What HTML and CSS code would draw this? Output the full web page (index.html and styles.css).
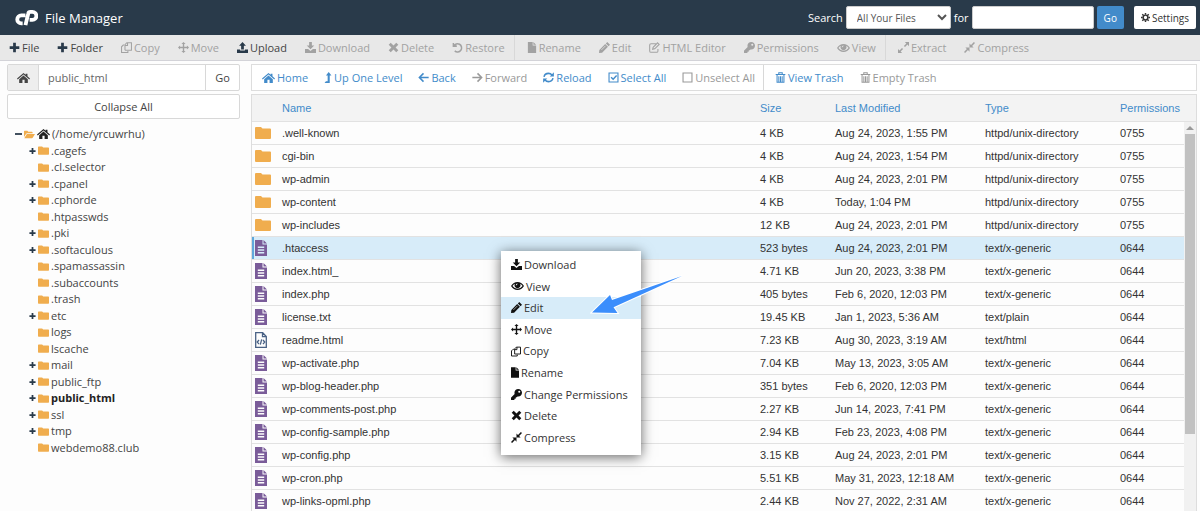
FILE: index.html
```html
<!DOCTYPE html>
<html lang="en">
<head>
    <meta charset="UTF-8">
    <title>File Manager</title>
    <link rel="stylesheet" href="styles.css">
</head>
<body>
    <!-- Icon set -->
    <svg class="sprite" aria-hidden="true">
        <symbol id="plus" viewBox="0 0 16 16"><path d="M6 1h4v5h5v4h-5v5H6v-5H1V6h5z"/></symbol>
        <symbol id="minus" viewBox="0 0 16 16"><path d="M0 6h16v4H0z"/></symbol>
        <symbol id="copy" viewBox="0 0 16 16"><path fill="none" stroke="currentColor" stroke-width="1.500" d="M5.800 12V3.800L8.500 1h6.700v11H5.800M9.500 1v4H6M4.500 4.500H3.200L.8 7v8.200H10V13"/></symbol>
        <symbol id="move" viewBox="0 0 16 16"><path d="M8 0l3 3H9v4h4V5l3 3-3 3V9H9v4h2l-3 3-3-3h2V9H3v2L0 8l3-3v2h4V3H5z"/></symbol>
        <symbol id="upload" viewBox="0 0 16 16"><path d="M8 0l5 5.500h-3V11H6V5.500H3zM0 11h4.500v1.500h7V11H16v5H0z"/></symbol>
        <symbol id="download" viewBox="0 0 16 16"><path d="M6 0h4v5h3.500L8 10.500 2.500 5H6zM0 10h4.500L8 13l3.500-3H16v6H0z"/></symbol>
        <symbol id="times" viewBox="0 0 16 16"><path d="M4 1l4 4 4-4 3 3-4 4 4 4-3 3-4-4-4 4-3-3 4-4-4-4z"/></symbol>
        <symbol id="undo" viewBox="0 0 16 16"><path fill="none" stroke="currentColor" stroke-width="2.200" d="M2 1.500V6h5M2.500 6A6 6 0 1 1 4 13"/></symbol>
        <symbol id="file" viewBox="0 0 12 16"><path d="M0 0h7v5h5v11H0zM8 0l4 4H8z"/></symbol>
        <symbol id="pencil" viewBox="0 0 16 16"><path d="M12 0l4 4-2 2-4-4zM9 3l4 4-8.500 8.500L0 16l.5-4.500z"/><path stroke="#fff" stroke-width=".8" d="M3.500 11.500l6-6"/></symbol>
        <symbol id="edit-box" viewBox="0 0 16 16"><path fill="none" stroke="currentColor" stroke-width="1.500" d="M10 2.500H3Q1 2.500 1 4.500V13q0 2 2 2h8q2 0 2-2v-3M12.500 1.200l2.300 2.300-6.500 6.500-3 .7.700-3z"/></symbol>
        <symbol id="key" viewBox="0 0 512 512"><path d="M512 176c0 97-79 176-176 176-11 0-22-1-33-3l-24 27q-8 8-18 8h-37v40q0 24-24 24h-40v40q0 24-24 24H24q-24 0-24-24v-78q0-10 7-17l162-162c-6-17-9-36-9-55C160 79 239 0 336 0s176 79 176 176zM336 128a48 48 0 1 0 96 0 48 48 0 0 0-96 0z"/></symbol>
        <symbol id="eye" viewBox="0 0 18 16"><path fill-rule="evenodd" d="M0 8q3.500-5.500 9-5.500T18 8q-3.500 5.500-9 5.500T0 8zm2 0q3 3.800 7 3.800T16 8q-1.300-2-3.300-3a4.200 4.200 0 1 1-7.400 0Q3.300 6 2 8zm7-3.500A2.500 2.500 0 0 0 6.500 7h1.200Q7.800 5.800 9 5.700z"/></symbol>
        <symbol id="expand" viewBox="0 0 16 16"><path d="M10 0h6v6l-2.200-2.200-3.600 3.600-1.600-1.600 3.600-3.600zM0 10l2.200 2.200 3.600-3.600 1.600 1.600-3.600 3.600L6 16H0z"/></symbol>
        <symbol id="compress" viewBox="0 0 16 16"><path d="M8 8V2l2.200 2.200L14.400 0 16 1.600l-4.200 4.200L14 8zM8 8v6l-2.200-2.200L1.600 16 0 14.400l4.200-4.200L2 8z"/></symbol>
        <symbol id="home" viewBox="0 0 18 16"><path d="M9 1l3 2.600V2h2.500v3.700L18 8.800 17 10 9 3.200 1 10 0 8.800zM9 4.500l6 5.200V15h-4.500v-4.500h-3V15H3V9.700z"/></symbol>
        <symbol id="level-up" viewBox="0 0 10 16"><path d="M6 0l4 5H7.500v11H0l2-2.500h2.500V5H2z"/></symbol>
        <symbol id="arrow-left" viewBox="0 0 16 16"><path fill="none" stroke="currentColor" stroke-width="2.200" d="M15.500 8H2M8 2L2 8l6 6"/></symbol>
        <symbol id="arrow-right" viewBox="0 0 16 16"><path fill="none" stroke="currentColor" stroke-width="2.200" d="M.5 8H14M8 2l6 6-6 6"/></symbol>
        <symbol id="refresh" viewBox="0 0 16 16"><path fill="none" stroke="currentColor" stroke-width="2.200" d="M1.500 7Q2.500 2 8 2q3 0 5 2.500M14.500 9Q13.500 14 8 14q-3 0-5-2.500"/><path d="M15.800.5v6H9.800zM.2 15.500v-6h6z"/></symbol>
        <symbol id="check-box" viewBox="0 0 16 16"><path fill="none" stroke="currentColor" stroke-width="1.600" d="M1.500 1.500h13v13h-13z"/><path fill="none" stroke="currentColor" stroke-width="2" d="M4.500 7.500l3 3 5-5.500"/></symbol>
        <symbol id="empty-box" viewBox="0 0 16 16"><path fill="none" stroke="currentColor" stroke-width="1.600" d="M1.500 1.500h13v13h-13z"/></symbol>
        <symbol id="trash" viewBox="0 0 14 16"><path fill="none" stroke="currentColor" stroke-width="1.500" d="M0 3.500h14M4.500 3V1h5v2M2 4v11h10V4M4.600 6v8M7 6v8M9.400 6v8"/></symbol>
        <symbol id="cog" viewBox="0 0 16 16"><circle cx="8" cy="8" r="4.200" fill="none" stroke="currentColor" stroke-width="2.600"/><path stroke="currentColor" stroke-width="2.600" d="M8 0v3M8 13v3M0 8h3M13 8h3M2.300 2.300l2.200 2.200M11.500 11.500l2.200 2.200M2.300 13.700l2.200-2.200M11.500 4.500l2.200-2.200"/></symbol>
        <symbol id="folder" viewBox="0 0 16 12"><path d="M1 0h5l1.500 1.500H15q1 0 1 1V11q0 1-1 1H1q-1 0-1-1V1q0-1 1-1z"/></symbol>
        <symbol id="folder-open" viewBox="0 0 18 12"><path d="M0 10V1q0-1 1-1h4.500L7 1.500h6q1 0 1 1V4H5Q4 4 3.300 5zM4.700 5H18l-3.500 6q-.6 1-1.500 1H.5z"/></symbol>
        <symbol id="file-text" viewBox="0 0 12 16"><path fill-rule="evenodd" d="M0 0h7.500v4.500H12V16H0zM8.500 0L12 3.500H8.500zM2.800 6.500V8h6.400V6.500zm0 2.700v1.500h6.400V9.200zm0 2.800v1.500h6.400V12z"/></symbol>
        <symbol id="file-code" viewBox="0 0 12 16"><path fill="none" stroke="currentColor" stroke-width="1.300" d="M.7.7h7L11.300 4.500v10.800H.7zM7.500.7v4h4M4 8L2.300 10 4 12M8 8l1.700 2L8 12M6.700 7.300l-1.400 5.400"/></symbol>
    </svg>

    <header class="topbar">
        <svg class="logo" viewBox="0 0 66 48" role="img" aria-label="cPanel">
            <path d="M30 18H18a11 11 0 0 0 0 23h4M30 46l8-33q1-5 6-5h6a11 11 0 0 1 0 23H42"/>
        </svg>
        <h1>File Manager</h1>
        <form class="search">
            <label for="scope">Search</label>
            <select id="scope">
                <option>All Your Files</option>
                <option>Only public_html</option>
                <option>Current Directory</option>
            </select>
            <label for="query">for</label>
            <input type="text" id="query">
            <button type="button" class="btn-primary">Go</button>
        </form>
        <button type="button" class="btn-settings"><svg class="icon"><use href="#cog"/></svg>Settings</button>
    </header>

    <nav class="toolbar">
        <button type="button"><svg class="icon"><use href="#plus"/></svg>File</button>
        <button type="button"><svg class="icon"><use href="#plus"/></svg>Folder</button>
        <button type="button" disabled><svg class="icon"><use href="#copy"/></svg>Copy</button>
        <button type="button" disabled><svg class="icon"><use href="#move"/></svg>Move</button>
        <button type="button"><svg class="icon"><use href="#upload"/></svg>Upload</button>
        <button type="button" disabled><svg class="icon"><use href="#download"/></svg>Download</button>
        <button type="button" disabled><svg class="icon"><use href="#times"/></svg>Delete</button>
        <button type="button" disabled><svg class="icon"><use href="#undo"/></svg>Restore</button>
        <span class="divider"></span>
        <button type="button" disabled><svg class="icon narrow"><use href="#file"/></svg>Rename</button>
        <button type="button" disabled><svg class="icon"><use href="#pencil"/></svg>Edit</button>
        <button type="button" disabled><svg class="icon"><use href="#edit-box"/></svg>HTML Editor</button>
        <button type="button" disabled><svg class="icon"><use href="#key"/></svg>Permissions</button>
        <button type="button" disabled><svg class="icon wide"><use href="#eye"/></svg>View</button>
        <span class="divider"></span>
        <button type="button" disabled><svg class="icon"><use href="#expand"/></svg>Extract</button>
        <button type="button" disabled><svg class="icon"><use href="#compress"/></svg>Compress</button>
    </nav>

    <main class="content">
        <aside class="sidebar">
            <form class="path">
                <button type="button" class="path-home" aria-label="Home"><svg class="icon wide"><use href="#home"/></svg></button>
                <input type="text" value="public_html" aria-label="Path">
                <button type="button">Go</button>
            </form>
            <button type="button" class="collapse">Collapse All</button>
            <ul class="tree">
                <li class="root"><svg class="toggle"><use href="#minus"/></svg><svg class="dir"><use href="#folder-open"/></svg><svg class="icon wide"><use href="#home"/></svg>(/home/yrcuwrhu)</li>
                <li><svg class="toggle"><use href="#plus"/></svg><svg class="dir"><use href="#folder"/></svg>.cagefs</li>
                <li><svg class="dir"><use href="#folder"/></svg>.cl.selector</li>
                <li><svg class="toggle"><use href="#plus"/></svg><svg class="dir"><use href="#folder"/></svg>.cpanel</li>
                <li><svg class="toggle"><use href="#plus"/></svg><svg class="dir"><use href="#folder"/></svg>.cphorde</li>
                <li><svg class="dir"><use href="#folder"/></svg>.htpasswds</li>
                <li><svg class="toggle"><use href="#plus"/></svg><svg class="dir"><use href="#folder"/></svg>.pki</li>
                <li><svg class="toggle"><use href="#plus"/></svg><svg class="dir"><use href="#folder"/></svg>.softaculous</li>
                <li><svg class="dir"><use href="#folder"/></svg>.spamassassin</li>
                <li><svg class="dir"><use href="#folder"/></svg>.subaccounts</li>
                <li><svg class="dir"><use href="#folder"/></svg>.trash</li>
                <li><svg class="toggle"><use href="#plus"/></svg><svg class="dir"><use href="#folder"/></svg>etc</li>
                <li><svg class="dir"><use href="#folder"/></svg>logs</li>
                <li><svg class="dir"><use href="#folder"/></svg>lscache</li>
                <li><svg class="toggle"><use href="#plus"/></svg><svg class="dir"><use href="#folder"/></svg>mail</li>
                <li><svg class="toggle"><use href="#plus"/></svg><svg class="dir"><use href="#folder"/></svg>public_ftp</li>
                <li class="current"><svg class="toggle"><use href="#plus"/></svg><svg class="dir"><use href="#folder"/></svg>public_html</li>
                <li><svg class="toggle"><use href="#plus"/></svg><svg class="dir"><use href="#folder"/></svg>ssl</li>
                <li><svg class="toggle"><use href="#plus"/></svg><svg class="dir"><use href="#folder"/></svg>tmp</li>
                <li><svg class="dir"><use href="#folder"/></svg>webdemo88.club</li>
            </ul>
        </aside>

        <section class="files">
            <div class="actions">
                <button type="button"><svg class="icon wide"><use href="#home"/></svg>Home</button>
                <button type="button"><svg class="icon slim"><use href="#level-up"/></svg>Up One Level</button>
                <button type="button"><svg class="icon"><use href="#arrow-left"/></svg>Back</button>
                <button type="button" disabled><svg class="icon"><use href="#arrow-right"/></svg>Forward</button>
                <button type="button"><svg class="icon"><use href="#refresh"/></svg>Reload</button>
                <button type="button"><svg class="icon"><use href="#check-box"/></svg>Select All</button>
                <button type="button" disabled><svg class="icon"><use href="#empty-box"/></svg>Unselect All</button>
                <span class="divider"></span>
                <button type="button"><svg class="icon"><use href="#trash"/></svg>View Trash</button>
                <button type="button" disabled><svg class="icon"><use href="#trash"/></svg>Empty Trash</button>
            </div>

            <div class="list">
                <table>
                    <thead>
                        <tr><th></th><th>Name</th><th>Size</th><th>Last Modified</th><th>Type</th><th>Permissions</th></tr>
                    </thead>
                    <tbody>
                        <tr><td><svg class="folder"><use href="#folder"/></svg></td><td>.well-known</td><td>4 KB</td><td>Aug 24, 2023, 1:55 PM</td><td>httpd/unix-directory</td><td>0755</td></tr>
                        <tr><td><svg class="folder"><use href="#folder"/></svg></td><td>cgi-bin</td><td>4 KB</td><td>Aug 24, 2023, 1:54 PM</td><td>httpd/unix-directory</td><td>0755</td></tr>
                        <tr><td><svg class="folder"><use href="#folder"/></svg></td><td>wp-admin</td><td>4 KB</td><td>Aug 24, 2023, 2:01 PM</td><td>httpd/unix-directory</td><td>0755</td></tr>
                        <tr><td><svg class="folder"><use href="#folder"/></svg></td><td>wp-content</td><td>4 KB</td><td>Today, 1:04 PM</td><td>httpd/unix-directory</td><td>0755</td></tr>
                        <tr><td><svg class="folder"><use href="#folder"/></svg></td><td>wp-includes</td><td>12 KB</td><td>Aug 24, 2023, 2:01 PM</td><td>httpd/unix-directory</td><td>0755</td></tr>
                        <tr class="selected"><td><svg class="doc"><use href="#file-text"/></svg></td><td>.htaccess</td><td>523 bytes</td><td>Aug 24, 2023, 2:01 PM</td><td>text/x-generic</td><td>0644</td></tr>
                        <tr><td><svg class="doc"><use href="#file-text"/></svg></td><td>index.html_</td><td>4.71 KB</td><td>Jun 20, 2023, 3:38 PM</td><td>text/x-generic</td><td>0644</td></tr>
                        <tr><td><svg class="doc"><use href="#file-text"/></svg></td><td>index.php</td><td>405 bytes</td><td>Feb 6, 2020, 12:03 PM</td><td>text/x-generic</td><td>0644</td></tr>
                        <tr><td><svg class="doc"><use href="#file-text"/></svg></td><td>license.txt</td><td>19.45 KB</td><td>Jan 1, 2023, 5:36 AM</td><td>text/plain</td><td>0644</td></tr>
                        <tr><td><svg class="doc code"><use href="#file-code"/></svg></td><td>readme.html</td><td>7.23 KB</td><td>Aug 30, 2023, 3:19 AM</td><td>text/html</td><td>0644</td></tr>
                        <tr><td><svg class="doc"><use href="#file-text"/></svg></td><td>wp-activate.php</td><td>7.04 KB</td><td>May 13, 2023, 3:05 AM</td><td>text/x-generic</td><td>0644</td></tr>
                        <tr><td><svg class="doc"><use href="#file-text"/></svg></td><td>wp-blog-header.php</td><td>351 bytes</td><td>Feb 6, 2020, 12:03 PM</td><td>text/x-generic</td><td>0644</td></tr>
                        <tr><td><svg class="doc"><use href="#file-text"/></svg></td><td>wp-comments-post.php</td><td>2.27 KB</td><td>Jun 14, 2023, 7:41 PM</td><td>text/x-generic</td><td>0644</td></tr>
                        <tr><td><svg class="doc"><use href="#file-text"/></svg></td><td>wp-config-sample.php</td><td>2.94 KB</td><td>Feb 23, 2023, 4:08 PM</td><td>text/x-generic</td><td>0644</td></tr>
                        <tr><td><svg class="doc"><use href="#file-text"/></svg></td><td>wp-config.php</td><td>3.15 KB</td><td>Aug 24, 2023, 2:01 PM</td><td>text/x-generic</td><td>0644</td></tr>
                        <tr><td><svg class="doc"><use href="#file-text"/></svg></td><td>wp-cron.php</td><td>5.51 KB</td><td>May 31, 2023, 12:18 AM</td><td>text/x-generic</td><td>0644</td></tr>
                        <tr><td><svg class="doc"><use href="#file-text"/></svg></td><td>wp-links-opml.php</td><td>2.44 KB</td><td>Nov 27, 2022, 2:31 AM</td><td>text/x-generic</td><td>0644</td></tr>
                    </tbody>
                </table>
                <div class="scrollbar"><span class="scroll-up"></span><span class="thumb"></span></div>
            </div>
        </section>
    </main>

    <!-- Right-click menu of the selected file -->
    <div class="menu" role="menu">
        <button type="button" role="menuitem"><svg class="icon"><use href="#download"/></svg>Download</button>
        <button type="button" role="menuitem"><svg class="icon wide"><use href="#eye"/></svg>View</button>
        <button type="button" role="menuitem" class="active"><svg class="icon"><use href="#pencil"/></svg>Edit</button>
        <button type="button" role="menuitem"><svg class="icon"><use href="#move"/></svg>Move</button>
        <button type="button" role="menuitem"><svg class="icon narrow"><use href="#copy"/></svg>Copy</button>
        <button type="button" role="menuitem"><svg class="icon slim"><use href="#file"/></svg>Rename</button>
        <button type="button" role="menuitem"><svg class="icon"><use href="#key"/></svg>Change Permissions</button>
        <button type="button" role="menuitem"><svg class="icon"><use href="#times"/></svg>Delete</button>
        <button type="button" role="menuitem"><svg class="icon"><use href="#compress"/></svg>Compress</button>
    </div>
    <svg class="pointer" viewBox="0 0 94 42" aria-hidden="true"><path d="M2 38.500L20 21l2 5L92 2 23.500 33.300l4 5.700z"/></svg>
</body>
</html>
```
FILE: styles.css
```css
* {
    box-sizing: border-box;
}

body {
    display: flex;
    flex-direction: column;
    height: 100vh;
    margin: 0;
    overflow: hidden;
    position: relative;
    font-family: "Open Sans", sans-serif;
    font-size: 11px;
    color: #444;
    background: #fdfdfd;
}

button, input, select {
    font: inherit;
    color: inherit;
    margin: 0;
}

button {
    display: flex;
    align-items: center;
    gap: 2px;
    padding: 0;
    border: 0;
    background: none;
    white-space: nowrap;
    cursor: pointer;
}

svg {
    flex: none;
    fill: currentColor;
}

.sprite {
    position: absolute;
    width: 0;
    height: 0;
}

.icon {
    width: 11px;
    height: 11px;
}

.icon.wide {
    width: 13px;
    height: 12px;
}

.icon.narrow {
    width: 10px;
}

.icon.slim {
    width: 8px;
}

/* Header */
.topbar {
    display: flex;
    align-items: center;
    height: 35px;
    padding: 0 4px 0 15px;
    background: #293a4a;
    color: #fff;
}

.logo {
    width: 23px;
    height: 17px;
    margin-right: 7px;
}

.logo path {
    fill: none;
    stroke: #fff;
    stroke-width: 11;
    stroke-linejoin: round;
}

h1 {
    margin: 0 auto 0 0;
    font-size: 13px;
    font-weight: normal;
}

.search {
    display: flex;
    align-items: center;
    gap: 3px;
    margin-right: 10px;
}

.search select, .search input {
    height: 23px;
    border: 1px solid #ccc;
    border-radius: 2px;
    background: #fff;
    color: #555;
    font-size: 10px;
}

.search select {
    width: 105px;
    padding: 0 0 0 6px;
}

.search input {
    width: 122px;
}

.btn-primary, .btn-settings {
    height: 23px;
    padding: 0 7px;
    font-size: 10px;
    border-radius: 2px;
}

.btn-primary {
    background: #428bca;
    color: #fff;
}

.btn-settings {
    background: #fff;
    color: #333;
}

.btn-settings .icon {
    width: 9px;
}

/* Toolbars */
.toolbar, .actions {
    display: flex;
    align-items: stretch;
}

.toolbar {
    height: 26px;
    background: #e8e8e8;
    border-bottom: 1px solid #d3d3d8;
}

.toolbar button {
    padding: 0 9px;
}

.toolbar .icon {
    color: #293a4a;
}

.toolbar button:disabled, .toolbar button:disabled .icon {
    color: #a2a2a2;
}

.divider {
    width: 1px;
    margin-right: 3px;
    background: #d8d8d8;
}

/* Page columns */
.content {
    display: flex;
    flex: 1;
    gap: 11px;
    min-height: 0;
    padding: 3px 3px 0 7px;
}

.sidebar {
    width: 233px;
}

.path {
    display: flex;
    height: 27px;
    border: 1px solid #d8d8d8;
    border-radius: 2px;
    background: #fff;
}

.path button {
    justify-content: center;
    width: 33px;
}

.path .path-home {
    width: 30px;
    background: #eee;
}

.path input {
    flex: 1;
    min-width: 0;
    padding: 0 9px;
    border: solid #d8d8d8;
    border-width: 0 1px;
    background: none;
    color: #666;
}

.collapse {
    justify-content: center;
    width: 100%;
    height: 25px;
    margin-top: 3px;
    border: 1px solid #d8d8d8;
    border-radius: 2px;
    background: #fff;
}

.tree {
    margin: 7px 0 0;
    padding: 0 0 0 21px;
    list-style: none;
    line-height: 1.5;
}

.tree li {
    display: flex;
    align-items: center;
    padding-left: 23px;
}

.tree .dir {
    width: 11px;
    height: 9px;
    margin: 0 2px 0 -13px;
    color: #f0ad4e;
}

.tree .toggle {
    width: 7px;
    height: 8px;
    margin: 0 15px 0 -22px;
    color: #293a4a;
}

.tree .root {
    gap: 2px;
    padding-left: 0;
    margin-left: -13px;
}

.tree .root .icon {
    color: #222;
}

.tree .root .toggle, .tree .root .dir {
    margin: 0;
}

.tree .current {
    font-weight: bold;
    color: #222;
}

/* File list */
.files {
    display: flex;
    flex: 1;
    flex-direction: column;
    gap: 3px;
    min-width: 0;
}

.actions {
    flex: none;
    height: 27px;
    padding-left: 2px;
    border: 1px solid #ddd;
    background: #fff;
    color: #428bca;
}

.actions button {
    padding: 0 8px;
}

.actions button:disabled {
    color: #999;
}

.list {
    position: relative;
    flex: 1;
    min-height: 0;
    overflow: hidden;
    border: 1px solid #ddd;
    border-bottom: 0;
    font-family: "Liberation Sans", Arial, sans-serif;
}

table {
    width: 100%;
    table-layout: fixed;
    border-collapse: collapse;
}

th, td {
    height: 23px;
    padding: 0;
    border-bottom: 1px solid #e2e2e2;
    text-align: left;
    white-space: nowrap;
    color: #333;
}

th {
    height: 26px;
    background: #f3f3f3;
    font-weight: normal;
    color: #428bca;
}

th:nth-child(1) { width: 30px; }
th:nth-child(3) { width: 75px; }
th:nth-child(4) { width: 150px; }
th:nth-child(5) { width: 135px; }
th:nth-child(6) { width: 76px; }

td svg {
    display: block;
    margin-left: 3px;
}

td .folder {
    width: 16px;
    height: 12px;
    color: #f0ad4e;
}

td .doc {
    width: 12px;
    height: 16px;
    color: #7a5c99;
}

td .code {
    color: #4a6285;
}

.selected td {
    background: #d7ecf9;
}

.selected td:first-child {
    box-shadow: inset 2px 0 #5fa8dc;
}

.scrollbar {
    position: absolute;
    top: 27px;
    right: 0;
    bottom: 0;
    width: 12px;
    background: #f1f1f1;
}

.scroll-up {
    display: block;
    width: 8px;
    height: 8px;
    margin: 0 2px 4px;
    border: 4px solid transparent;
    border-top: 0;
    border-bottom-color: #999;
}

.thumb {
    display: block;
    height: 300px;
    margin: 0 1px;
    background: #c1c1c1;
}

/* Context menu */
.menu {
    position: absolute;
    top: 251px;
    left: 501px;
    width: 140px;
    padding: 3px 0 7px;
    background: #fff;
    box-shadow: 0 2px 12px rgba(0, 0, 0, 0.6);
    line-height: 1.6;
    color: #333;
}

.menu button {
    width: 100%;
    padding: 2px 10px;
}

.menu .icon {
    color: #111;
}

.menu .active {
    background: #d7ecf9;
}

.pointer {
    position: absolute;
    top: 274px;
    left: 590px;
    width: 94px;
    height: 42px;
}

.pointer path {
    fill: #3b8efc;
    stroke: #fff;
    stroke-width: 2;
    paint-order: stroke;
}
```
